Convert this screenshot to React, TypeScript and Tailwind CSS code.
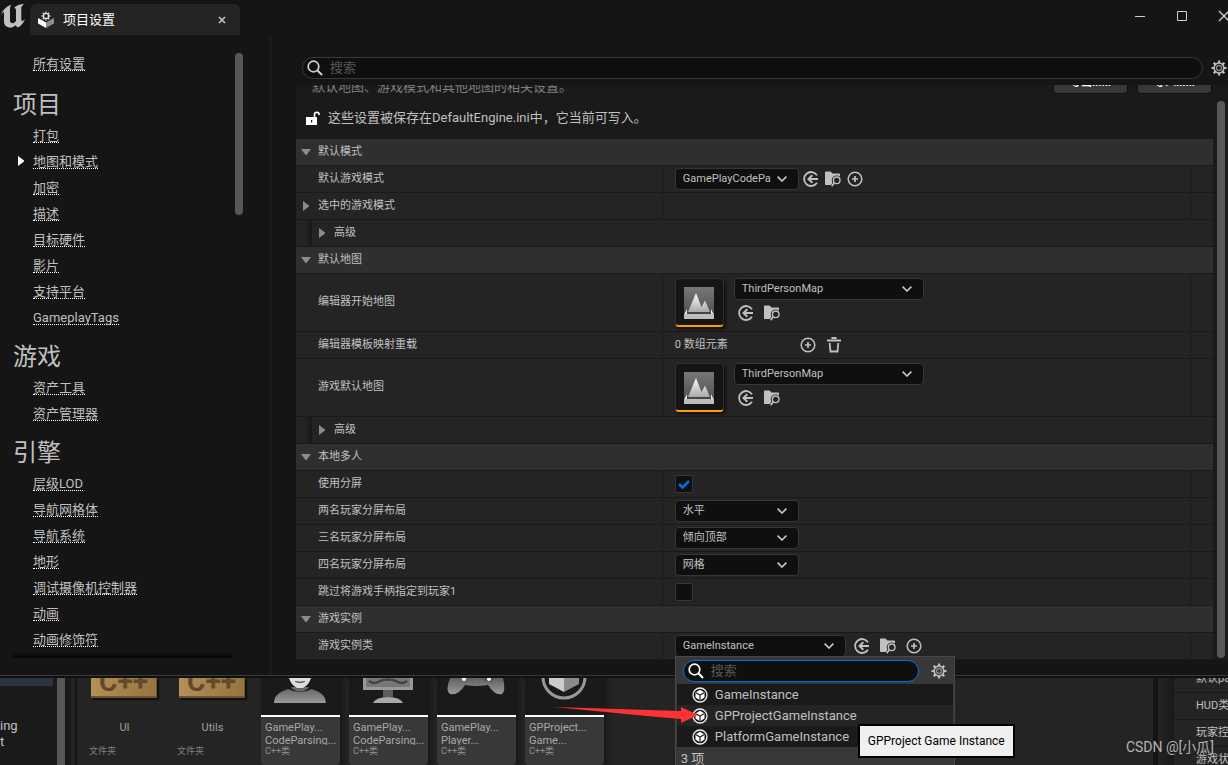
import type { ReactNode } from "react";

const sidebar = [
  { title: "项目", items: ["打包", "地图和模式", "加密", "描述", "目标硬件", "影片", "支持平台", "GameplayTags"] },
  { title: "游戏", items: ["资产工具", "资产管理器"] },
  { title: "引擎", items: ["层级LOD", "导航网格体", "导航系统", "地形", "调试摄像机控制器", "动画", "动画修饰符"] },
];

const gameClasses = ["GameInstance", "GPProjectGameInstance", "PlatformGameInstance"];

/* ---------- icons ---------- */

function EngineLogo() {
  return (
    <svg width="26" height="26" viewBox="0 0 26 26" fill="#c0c0c0" aria-hidden="true">
      <path d="M1 12C2.500 7 6 3.500 11.500 1.500C10.500 2.800 10 4 10 5.500V17.500C10 19.500 11.500 20.500 13 20.200C14.500 19.800 15.500 18.800 16 18V7.500C16 5.500 15.200 4.800 14 5C16.500 2.500 20 1 24 1C22 2.500 21.300 4 21.300 6V16.500C21.300 18.300 22.500 18.600 25 16C23.500 20.500 20.500 23.500 17.500 24.500L15.500 22.300C13.500 24 11.500 25 9 24.500C6 24 4 22 4 18.500V9.500C4 8.300 2.800 9.500 1 12Z" />
    </svg>
  );
}

function ProjectIcon() {
  return (
    <svg width="18" height="18" viewBox="0 0 18 18" aria-hidden="true">
      <path d="M1 7L9 11.500V17L1 12.500Z" fill="#fff" />
      <path d="M17 7L9 11.500V17L17 12.500Z" fill="#8f8f8f" />
      <circle cx="9" cy="5" r="4.300" fill="#242424" />
      <circle cx="9" cy="5" r="2.600" fill="none" stroke="#e8e8e8" strokeWidth="1.300" />
      <path d="M9 .5v1.300M9 8.200v1.300M4.500 5h1.300M12.200 5h1.300M5.800 1.800l.9.9M11.300 7.300l.9.9M12.200 1.800l-.9.9M6.700 7.300l-.9.900" stroke="#e8e8e8" strokeWidth="1.400" />
    </svg>
  );
}

function SearchIcon({ color = "#d0d0d0" }: { color?: string }) {
  return (
    <svg width="16" height="16" viewBox="0 0 16 16" fill="none" stroke={color} strokeWidth="1.700" aria-hidden="true">
      <circle cx="6.500" cy="6.500" r="5.300" />
      <path d="M10.300 10.300L15 15" strokeWidth="2" />
    </svg>
  );
}

function GearIcon() {
  return (
    <svg width="16" height="16" viewBox="0 0 16 16" fill="none" stroke="#c0c0c0" aria-hidden="true">
      <circle cx="8" cy="8" r="4.900" strokeWidth="1.500" />
      <circle cx="8" cy="8" r="2.500" stroke="#888" strokeWidth="1.400" />
      <path
        d="M8 .5v2.500M8 13v2.500M.5 8H3M13 8h2.500M2.700 2.700l1.800 1.800M11.500 11.500l1.800 1.800M13.300 2.700l-1.800 1.800M4.500 11.500l-1.800 1.800"
        strokeWidth="2.200"
      />
    </svg>
  );
}

function UnlockIcon() {
  return (
    <svg width="14" height="14" viewBox="0 0 14 14" aria-hidden="true">
      <path d="M0 6h11v8H0Z" fill="#fff" />
      <path d="M8.500 6V3.500a2.300 2.300 0 0 1 4.600 0V4" fill="none" stroke="#fff" strokeWidth="1.600" />
      <path d="M5 9h1.200v2.500H5Z" fill="#1a1a1a" />
    </svg>
  );
}

function UseIcon() {
  return (
    <svg width="16" height="16" viewBox="0 0 16 16" fill="none" stroke="#c0c0c0" aria-hidden="true">
      <path d="M14 4.200A7 7 0 1 0 14 11.800" strokeWidth="1.800" />
      <path d="M15 8H5.500M9.300 4.300L5.500 8l3.800 3.700" strokeWidth="2" />
    </svg>
  );
}

function BrowseIcon() {
  return (
    <svg width="16" height="16" viewBox="0 0 16 16" aria-hidden="true">
      <path d="M0 1.300Q0 .5.800.5H5.500L7.500 2.500H14.200Q15 2.500 15 3.300V14H.8Q0 14 0 13.200Z" fill="#c0c0c0" />
      <path d="M16 9.500L16 16H4.500L8 11Z" fill="#242424" />
      <circle cx="11.700" cy="9.300" r="4.900" fill="#242424" />
      <circle cx="11.700" cy="9.300" r="3.300" fill="none" stroke="#c0c0c0" strokeWidth="1.400" />
      <path d="M9.400 11.700L6.700 15.300" stroke="#c0c0c0" strokeWidth="1.700" />
    </svg>
  );
}

function PlusIcon() {
  return (
    <svg width="16" height="16" viewBox="0 0 16 16" fill="none" stroke="#c0c0c0" aria-hidden="true">
      <circle cx="8" cy="8" r="6.800" strokeWidth="1.500" />
      <path d="M8 5v6M5 8h6" strokeWidth="1.700" />
    </svg>
  );
}

function TrashIcon() {
  return (
    <svg width="16" height="16" viewBox="0 0 16 16" fill="none" stroke="#c0c0c0" aria-hidden="true">
      <path d="M1 3.500h14M5.500 1h5" strokeWidth="1.800" />
      <path d="M3.700 6v.5L4.500 14.500h7L12.300 6" strokeWidth="1.800" />
    </svg>
  );
}

function ClassIcon() {
  return (
    <svg width="16" height="16" viewBox="0 0 16 16" aria-hidden="true">
      <circle cx="8" cy="8" r="7" fill="#1a1a1a" stroke="#eee" strokeWidth="1.300" />
      <path d="M8 2.800l4.500 2.600v5.200L8 13.200l-4.500-2.600V5.400Z" fill="#fff" />
      <path d="M4 5.700L8 8l4-2.300M8 8v5" fill="none" stroke="#222" strokeWidth="1.200" />
    </svg>
  );
}

function Chevron() {
  return (
    <svg width="10" height="6" viewBox="0 0 10 6" fill="none" stroke="#c8c8c8" strokeWidth="1.600" aria-hidden="true">
      <path d="M.6.600L5 5L9.400.600" />
    </svg>
  );
}

function Expander({ open = false }: { open?: boolean }) {
  return (
    <svg width="10" height="10" viewBox="0 0 10 10" fill="#8c8c8c" aria-hidden="true">
      <path d={open ? "M0 2H10L5.500 8H4.500Z" : "M2 0L8 4.500V5.500L2 10Z"} />
    </svg>
  );
}

function LevelThumb() {
  return (
    <div className="h-[49px] w-[49px] shrink-0 overflow-hidden rounded border border-[#303030] border-b-2 border-b-[#ff9c00] bg-[#151515] shadow-[2px_2px_3px_#111]">
      <svg width="47" height="46" viewBox="0 0 47 46" aria-hidden="true">
        <defs>
          <linearGradient id="sky" x1="0" y1="0" x2="0" y2="1">
            <stop offset="0" stopColor="#777" />
            <stop offset="1" stopColor="#4a4a4a" />
          </linearGradient>
          <linearGradient id="peak" x1="0" y1="0" x2="0" y2="1">
            <stop offset="0" stopColor="#fff" />
            <stop offset="1" stopColor="#a8a8a8" />
          </linearGradient>
        </defs>
        <path d="M8 8H38V40H8Z" fill="url(#sky)" />
        <path d="M8 36L11 30V34H35V30L38 36Z" fill="#eee" />
        <path d="M12 33L20 14L25.500 28L29 21.500L34 33Z" fill="url(#peak)" />
        <path d="M11 33H35V35H11Z" fill="#444" />
        <path d="M8 35H38V40H8Z" fill="#bdbdbd" />
      </svg>
    </div>
  );
}

/* ---------- controls ---------- */

function IconButton({ label, children }: { label: string; children: ReactNode }) {
  return (
    <button type="button" aria-label={label} className="flex h-4 w-4 shrink-0 items-center justify-center">
      {children}
    </button>
  );
}

function Dropdown({ id, value, width }: { id: string; value: string; width: string }) {
  return (
    <div className={`relative shrink-0 ${width}`}>
      <select
        id={id}
        defaultValue={value}
        className="block h-[22px] w-full appearance-none rounded border border-[#363636] bg-[#0f0f0f] pr-5 pl-[7px] text-[11px] text-[#c0c0c0]"
      >
        <option>{value}</option>
      </select>
      <span className="pointer-events-none absolute inset-y-0 right-3 flex items-center">
        <Chevron />
      </span>
    </div>
  );
}

function Category({ title }: { title: string }) {
  return (
    <button type="button" className="flex h-[27px] w-full items-center gap-[7px] border-b border-[#1a1a1a] bg-[#2f2f2f] pl-[5px] text-left">
      <Expander open />
      <span>{title}</span>
    </button>
  );
}

function Advanced() {
  return (
    <div className="flex h-[27px] border-b border-[#1a1a1a] bg-[#242424]">
      <div className="w-4 shrink-0 border-r border-[#1a1a1a] bg-linear-to-r from-[#242424] from-60% to-[#191919]" />
      <button type="button" className="flex items-center gap-[7px] pl-[5px]">
        <Expander />
        <span>高级</span>
      </button>
    </div>
  );
}

function Row({ name, htmlFor, expandable = false, tall = false, children }: {
  name: string;
  htmlFor?: string;
  expandable?: boolean;
  tall?: boolean;
  children?: ReactNode;
}) {
  return (
    <div className={`flex border-b border-[#1a1a1a] bg-[#242424] ${tall ? "h-[58px]" : "h-[27px]"}`}>
      <div className="flex w-2/5 shrink-0 items-center gap-[7px] border-r border-[#1a1a1a] pl-[5px]">
        <span className="w-[10px]">{expandable && <Expander />}</span>
        <label htmlFor={htmlFor}>{name}</label>
      </div>
      <div className="flex min-w-0 flex-1 items-center pl-3">{children}</div>
      <div className="w-[23px] shrink-0 border-l border-[#1a1a1a]" />
    </div>
  );
}

function MapPicker({ id }: { id: string }) {
  return (
    <div className="flex gap-[10px]">
      <LevelThumb />
      <div>
        <Dropdown id={id} value="ThirdPersonMap" width="w-[190px]" />
        <div className="mt-[5px] flex gap-[10px] pl-1">
          <IconButton label="使用选中资产"><UseIcon /></IconButton>
          <IconButton label="浏览"><BrowseIcon /></IconButton>
        </div>
      </div>
    </div>
  );
}

function Checkbox({ id, checked = false }: { id: string; checked?: boolean }) {
  return (
    <span className="relative flex">
      <input
        id={id}
        type="checkbox"
        defaultChecked={checked}
        className="peer h-[18px] w-[18px] appearance-none rounded-[3px] border border-[#363636] bg-[#0f0f0f]"
      />
      <svg className="pointer-events-none absolute inset-0 hidden peer-checked:block" width="18" height="18" viewBox="0 0 18 18" fill="none" stroke="#0070e0" strokeWidth="2.500" aria-hidden="true">
        <path d="M4 9l3.500 3.500L14 6" />
      </svg>
    </span>
  );
}

function ClassMenu() {
  return (
    <div className="absolute top-[21px] left-0 z-20 w-[280px] border border-[#484848] bg-[#383838]">
      <div className="flex items-center gap-3 pt-[3px] pb-[2px] pl-[7px]">
        <div className="flex h-[22px] w-[236px] items-center gap-[7px] rounded-full border border-[#0070e0] bg-[#0f0f0f] pl-1">
          <SearchIcon color="#fff" />
          <input type="text" aria-label="搜索类" placeholder="搜索" className="min-w-0 flex-1 bg-transparent text-[13px] placeholder:text-[#575757]" />
        </div>
        <IconButton label="视图选项"><GearIcon /></IconButton>
      </div>
      <div className="mx-px">
        {gameClasses.map((name, i) => (
          <button
            key={name}
            type="button"
            className={`flex h-[21px] w-full items-center gap-[7px] pl-[15px] text-left text-[13px] text-[#c0c0c0] ${i === 1 ? "bg-[#242424]" : "bg-[#1a1a1a]"}`}
          >
            <ClassIcon />
            {name}
          </button>
        ))}
      </div>
      <div className="h-7 pt-[2px] pl-[5px] text-[13px]">3 项</div>
      <div role="tooltip" className="absolute top-[67px] left-[182px] border-2 border-black bg-[#f0f0f0] px-2 py-[7px] text-[12px] leading-4 whitespace-nowrap text-black">
        GPProject Game Instance
      </div>
    </div>
  );
}

/* ---------- content browser ---------- */

function Folder({ name }: { name: string }) {
  return (
    <div className="w-[79px] shrink-0">
      <div className="ml-[6px] flex h-5 w-[66px] items-end justify-center overflow-hidden border-r border-b-2 border-[#6e5330] bg-linear-to-r from-[#b58f58] to-[#96733f] shadow-[2px_2px_1px_#111]">
        <span className="text-[28px] leading-[28px] font-bold text-[#614a2a]">C++</span>
      </div>
      <div className="mt-[23px] h-6 text-center text-[11px] leading-[13px] text-[#a0a0a0]">{name}</div>
      <div className="pl-1 text-[9px] leading-[12px] text-[#808080]">文件夹</div>
    </div>
  );
}

function Asset({ lines, children }: { lines: string[]; children: ReactNode }) {
  return (
    <div className="flex w-[79px] shrink-0 flex-col rounded-b bg-[#383838] shadow-[4px_0_4px_#1a1a1a]">
      <div className="h-[39px] border-b-2 border-white bg-[#1a1a1a]">
        <svg width="79" height="37" viewBox="0 0 79 37" aria-hidden="true">
          <defs>
            <linearGradient id="metal" x1="0" y1="0" x2="0" y2="1">
              <stop offset="0" stopColor="#606060" />
              <stop offset="1" stopColor="#9a9a9a" />
            </linearGradient>
          </defs>
          {children}
        </svg>
      </div>
      <div className="mt-1 h-6 overflow-hidden pl-1 text-[11px] leading-[13px] whitespace-nowrap text-[#a8a8a8]">
        {lines.map((line) => <div key={line}>{line}</div>)}
      </div>
      <div className="pl-1 text-[9px] leading-[12px] text-[#909090]">C++类</div>
    </div>
  );
}

function ContentBrowser() {
  return (
    <div className="flex min-h-0 flex-1 overflow-hidden bg-[#242424]">
      <div className="w-[57px] shrink-0 overflow-hidden bg-[#1a1a1a] text-[13px] leading-4 text-[#c0c0c0]">
        <div className="mr-1 h-2 bg-[#2b3440]" />
        <div className="mt-8">ing</div>
        <div>t</div>
      </div>
      <div className="w-2 shrink-0 bg-[#575757]" />
      <div className="w-[6px] shrink-0 bg-[#1a1a1a]" />
      <div className="w-[6px] shrink-0 border-r-2 border-[#151515]" />
      <div className="flex min-w-0 flex-1 gap-[9px] overflow-hidden pl-2">
        <Folder name="UI" />
        <Folder name="Utils" />
        <Asset lines={["GamePlay...", "CodeParsing..."]}>
          <path d="M13 25C14 14 22 14 31 9H47C56 14 64 14 65 25Z" fill="url(#metal)" />
          <path d="M27 7Q39 20 51 7V11Q39 17 27 11Z" fill="#1a1a1a" />
          <path d="M28 0H50Q48 7 42 10H36Q30 7 28 0Z" fill="#ddd" />
          <path d="M34 3.500Q39 6 44 3.500Q39 4.500 34 3.500Z" fill="#333" stroke="#555" strokeWidth=".7" />
        </Asset>
        <Asset lines={["GamePlay...", "CodeParsing..."]}>
          <path d="M14 0H64V12H14Z" fill="#999" />
          <path d="M17 0H61V9H17Z" fill="#777" />
          <path d="M20 3Q25 7 31 3Q39 0 47 3Q53 7 58 3" fill="none" stroke="#444" strokeWidth="2.500" />
          <path d="M34 12H44V19H34Z" fill="#5c5c5c" />
          <path d="M24 25Q27 19 39 19Q51 19 54 25Z" fill="#aaa" />
        </Asset>
        <Asset lines={["GamePlay...", "Player..."]}>
          <path d="M13 0H66Q69 13 65 16Q58 18 51 7Q39 9 28 7Q21 18 13 16Q8 13 13 0Z" fill="url(#metal)" />
          <circle cx="27" cy="1" r="2" fill="#fff" />
          <circle cx="52" cy="-2" r="6" fill="#555" />
          <circle cx="52" cy="1" r="2" fill="#fff" />
        </Asset>
        <Asset lines={["GPProject...", "Game..."]}>
          <circle cx="39" cy="-1" r="21" fill="none" stroke="#999" strokeWidth="3" />
          <path d="M24 0H39V14L24 6Z" fill="#ccc" />
          <path d="M39 0H54V6L39 14Z" fill="#8a8a8a" />
        </Asset>
      </div>
      <div className="w-[5px] shrink-0 bg-[#151515]" />
      <div className="relative w-[70px] shrink-0">
        <div className="flex h-full text-[11px] whitespace-nowrap text-[#c0c0c0]">
          <div className="w-4 shrink-0 bg-linear-to-r from-[#242424] to-[#191919]" />
          <div className="flex-1 overflow-hidden">
            <div className="-mt-[12px] flex h-[27px] items-center border-b border-[#1a1a1a] pl-[22px]">默认pawn类</div>
            <div className="flex h-[27px] items-center border-b border-[#1a1a1a] pl-[22px]">HUD类</div>
            <div className="flex h-[27px] items-center border-b border-[#1a1a1a] pl-[22px]">玩家控制器类</div>
            <div className="flex h-[27px] items-center pl-[22px]">游戏状态类</div>
          </div>
        </div>
        <div className="absolute top-[60px] right-[14px] text-[14px] leading-[18px] whitespace-nowrap text-[#b5b5b5]">CSDN @[小瓜]</div>
      </div>
    </div>
  );
}

/* ---------- page ---------- */

export default function App() {
  return (
    <div className="relative flex h-screen flex-col overflow-hidden bg-[#151515] font-[Roboto,'Noto_Sans_CJK_SC',sans-serif] text-[#c0c0c0]">
      <section className="relative z-10 shrink-0 border-b-2 border-[#101010]">
        <header className="flex h-[35px] overflow-hidden">
          <div className="w-[30px] pt-[3px]"><EngineLogo /></div>
          <div className="mt-1 flex w-[210px] items-center rounded-t-md bg-[#242424] pl-[7px] text-[13px] text-white">
            <ProjectIcon />
            <span className="ml-2 flex-1">项目设置</span>
            <button type="button" aria-label="关闭标签" className="mr-[14px]">
              <svg width="8" height="8" viewBox="0 0 8 8" stroke="#c0c0c0" strokeWidth="1.700" aria-hidden="true"><path d="M1 1L7 7M7 1L1 7" /></svg>
            </button>
          </div>
          <div className="-mr-[17px] ml-auto flex h-8">
            <button type="button" aria-label="最小化" className="flex w-[42px] items-center justify-center">
              <svg width="10" height="10" viewBox="0 0 10 10" aria-hidden="true"><path d="M0 5.500H10" stroke="#d0d0d0" /></svg>
            </button>
            <button type="button" aria-label="最大化" className="flex w-[42px] items-center justify-center">
              <svg width="10" height="10" viewBox="0 0 10 10" aria-hidden="true"><path d="M.5.500H9.500V9.500H.5Z" fill="none" stroke="#d0d0d0" /></svg>
            </button>
            <button type="button" aria-label="关闭" className="flex w-[42px] items-center justify-center">
              <svg width="12" height="12" viewBox="0 0 12 12" aria-hidden="true"><path d="M1 1L11 11M11 1L1 11" stroke="#d0d0d0" strokeWidth="1.300" /></svg>
            </button>
          </div>
        </header>

        <div className="flex border-b border-[#3a3a3a]">
          <nav className="flex w-[269px] shrink-0 pb-[15px]">
            <div className="w-[222px] pt-[15px] pl-[13px]">
              <div className="mb-[2px] flex h-[26px] items-start pt-1 pl-5">
                <a href="#all" className="h-[17px] border-b border-dotted border-white text-[13px] leading-[19px]">所有设置</a>
              </div>
              {sidebar.map((group) => (
                <div key={group.title}>
                  <h2 className="h-11 pt-[11px] text-[24px] leading-8">{group.title}</h2>
                  {group.items.map((item) => (
                    <div key={item} className="flex h-[26px] items-start pt-1">
                      <span className="flex h-[18px] w-5 items-center pl-[5px]">
                        {item === "地图和模式" && (
                          <svg width="6" height="10" viewBox="0 0 6 10" fill="#fff" aria-hidden="true"><path d="M0 0L6 4.500V5.500L0 10Z" /></svg>
                        )}
                      </span>
                      <a href={`#${item}`} className="h-[17px] border-b border-dotted border-white text-[13px] leading-[19px]">{item}</a>
                    </div>
                  ))}
                </div>
              ))}
              <div className="-mr-[10px] h-[6px] bg-linear-to-b from-[#151515] to-[#050505]" />
            </div>
            <div className="mt-[18px] ml-[13px] h-[162px] w-2 rounded-full bg-[#575757]" />
          </nav>
          <div className="w-[3px] shrink-0 bg-[#1a1a1a]" />

          <main className="min-w-0 flex-1 pt-[22px] pb-[15px] pl-6">
            <div className="flex items-center gap-2 pr-[1px] pb-[6px] pl-[6px]">
              <div className="flex h-[22px] flex-1 items-center gap-[7px] rounded-full border border-[#383838] bg-[#0f0f0f] pl-1">
                <SearchIcon />
                <input type="text" aria-label="搜索设置" placeholder="搜索" className="min-w-0 flex-1 bg-transparent text-[13px] leading-[18px] placeholder:text-[#575757]" />
              </div>
              <IconButton label="设置选项"><GearIcon /></IconButton>
            </div>

            <div className="flex bg-[#1a1a1a]">
              <div className="min-w-0 flex-1 text-[11px]">
                {/* scrolled: only the lower part of the first line is visible */}
                <div className="flex h-[54px] flex-col overflow-hidden">
                  <div className="-mt-[13px] flex h-[22px] shrink-0 items-end gap-[9px] pr-[1px] pl-4">
                    <p className="flex-1 text-[13px] leading-[14px] text-[#808080]">默认地图、游戏模式和其他地图的相关设置。</p>
                    <button type="button" className="h-[22px] w-[75px] rounded border border-[#0f0f0f] bg-[#383838] font-bold text-white">导出......</button>
                    <button type="button" className="h-[22px] w-[75px] rounded border border-[#0f0f0f] bg-[#383838] font-bold text-white">导入......</button>
                  </div>
                  <div className="mt-[14px] flex items-center gap-2 pl-[10px] text-[13px] leading-5">
                    <UnlockIcon />
                    <span>这些设置被保存在DefaultEngine.ini中，它当前可写入。</span>
                  </div>
                </div>

                <Category title="默认模式" />
                <Row name="默认游戏模式" htmlFor="game-mode">
                  <div className="flex items-center gap-[6px]">
                    <Dropdown id="game-mode" value="GamePlayCodePa" width="w-[124px] -mr-[2px]" />
                    <IconButton label="使用选中类"><UseIcon /></IconButton>
                    <IconButton label="浏览"><BrowseIcon /></IconButton>
                    <IconButton label="新建"><PlusIcon /></IconButton>
                  </div>
                </Row>
                <Row name="选中的游戏模式" expandable />
                <Advanced />
                <Category title="默认地图" />
                <Row name="编辑器开始地图" htmlFor="editor-map" tall><MapPicker id="editor-map" /></Row>
                <Row name="编辑器模板映射重载">
                  <span className="w-[125px]">0 数组元素</span>
                  <div className="flex gap-[10px]">
                    <IconButton label="添加元素"><PlusIcon /></IconButton>
                    <IconButton label="清空"><TrashIcon /></IconButton>
                  </div>
                </Row>
                <Row name="游戏默认地图" htmlFor="game-map" tall><MapPicker id="game-map" /></Row>
                <Advanced />
                <Category title="本地多人" />
                <Row name="使用分屏" htmlFor="split"><Checkbox id="split" checked /></Row>
                <Row name="两名玩家分屏布局" htmlFor="two"><Dropdown id="two" value="水平" width="w-[124px]" /></Row>
                <Row name="三名玩家分屏布局" htmlFor="three"><Dropdown id="three" value="倾向顶部" width="w-[124px]" /></Row>
                <Row name="四名玩家分屏布局" htmlFor="four"><Dropdown id="four" value="网格" width="w-[124px]" /></Row>
                <Row name="跳过将游戏手柄指定到玩家1" htmlFor="skip"><Checkbox id="skip" /></Row>
                <Category title="游戏实例" />
                <Row name="游戏实例类" htmlFor="instance">
                  <div className="relative flex items-center gap-[10px]">
                    <Dropdown id="instance" value="GameInstance" width="w-[171px] -mr-[2px]" />
                    <IconButton label="使用选中类"><UseIcon /></IconButton>
                    <IconButton label="浏览"><BrowseIcon /></IconButton>
                    <IconButton label="新建"><PlusIcon /></IconButton>
                    <ClassMenu />
                  </div>
                </Row>
              </div>
              <div className="mt-4 mr-[3px] mb-[2px] ml-1 w-2 shrink-0 rounded-full bg-[#575757]" />
            </div>
          </main>
        </div>
      </section>

      <ContentBrowser />

      {/* annotation arrow pointing at the highlighted class */}
      <svg className="pointer-events-none absolute top-[704px] left-[552px] z-20" width="148" height="22" viewBox="0 0 148 22" fill="#fd3333" aria-hidden="true">
        <path d="M2 3L129 7V3L146 11L129 19V15L100 12.500Z" />
      </svg>
    </div>
  );
}
